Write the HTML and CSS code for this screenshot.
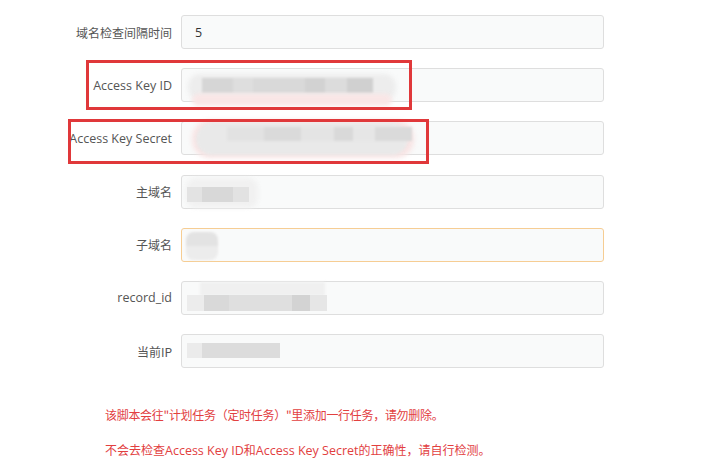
FILE: index.html
```html
<!DOCTYPE html>
<html>
<head>
<meta charset="utf-8">
<link rel="stylesheet" href="styles.css">
</head>
<body>
<form class="form">
  <div class="row">
    <label class="label">域名检查间隔时间</label>
    <div class="field"><span class="value">5</span></div>
  </div>
  <div class="row">
    <label class="label latin">Access Key ID</label>
    <div class="field">
      <span class="blob blob-id-bg"></span>
      <span class="blob blob-id"></span>
      <span class="blob blob-id-pink"></span>
    </div>
    <span class="mark mark-id"></span>
  </div>
  <div class="row">
    <label class="label latin">Access Key Secret</label>
    <div class="field">
      <span class="blob blob-sec-pink"></span>
      <span class="blob blob-sec-bg"></span>
      <span class="blob blob-sec"></span>
    </div>
    <span class="mark mark-sec"></span>
  </div>
  <div class="row">
    <label class="label">主域名</label>
    <div class="field">
      <span class="blob blob-main-bg"></span>
      <span class="blob blob-main"></span>
    </div>
  </div>
  <div class="row">
    <label class="label">子域名</label>
    <div class="field focus">
      <span class="blob blob-sub"></span>
    </div>
  </div>
  <div class="row">
    <label class="label latin">record_id</label>
    <div class="field">
      <span class="blob blob-rec-bg"></span>
      <span class="blob blob-rec"></span>
    </div>
  </div>
  <div class="row">
    <label class="label">当前IP</label>
    <div class="field">
      <span class="blob blob-ip"></span>
    </div>
  </div>
  <div class="notes">
    <p class="note tight">该脚本会往"计划任务（定时任务）"里添加一行任务，请勿删除。</p>
    <p class="note">不会去检查<span class="en">Access Key ID</span>和<span class="en">Access Key Secret</span>的正确性，请自行检测。</p>
  </div>
</form>
</body>
</html>
```

FILE: styles.css
```css
html, body {
  margin: 0;
  padding: 0;
  background: #ffffff;
}
body {
  width: 720px;
  height: 468px;
  overflow: hidden;
  font-family: "Open Sans", "Noto Sans CJK SC", sans-serif;
  font-size: 12px;
  color: #555555;
}
.form {
  display: flex;
  flex-direction: column;
  padding-top: 15px;
}
.row {
  position: relative;
  display: grid;
  grid-template-columns: 172px 423px;
  column-gap: 9px;
  align-items: center;
  height: 34px;
  margin-bottom: 19.2px;
}
.label {
  text-align: right;
  font-family: "Noto Sans CJK SC", sans-serif;
  font-size: 12px;
  color: #555555;
  white-space: nowrap;
}
.label.latin {
  font-family: "Open Sans", "Noto Sans CJK SC", sans-serif;
  font-size: 12.5px;
}
.field {
  position: relative;
  height: 34px;
  box-sizing: border-box;
  border: 1px solid #dedede;
  border-radius: 3px;
  background: #f9fafa;
  display: flex;
  align-items: center;
  padding-left: 13px;
  overflow: visible;
}
.field.focus {
  border-color: #f6cd93;
}
.value {
  font-family: "Open Sans", sans-serif;
  font-size: 12.5px;
  color: #333333;
}
.blob {
  position: absolute;
  display: block;
}
.blob-id-bg {
  left: 6px; top: 5px; width: 208px; height: 26px;
  background: #ededed;
  border-radius: 12px;
  filter: blur(2px);
}
.blob-id-pink {
  left: 10px; top: 25px; width: 200px; height: 12px;
  background: #f9e6e6;
  border-radius: 8px;
  filter: blur(2px);
}
.blob-id {
  left: 20px; top: 9px; width: 171px; height: 15px;
  background: linear-gradient(90deg, #d6d6d6 0 18%, #dedede 18% 30%, #d9d9d9 30% 60%, #d2d2d2 60% 72%, #dcdcdc 72% 85%, #d0d0d0 85% 100%);
  filter: blur(0.8px);
}
.blob-sec-pink {
  left: 10px; top: -2px; width: 222px; height: 38px;
  background: #f8e4e4;
  border-radius: 18px;
  filter: blur(2.5px);
}
.blob-sec-bg {
  left: 14px; top: 1px; width: 212px; height: 32px;
  background: #e9e9e9;
  border-radius: 16px;
  filter: blur(1.5px);
}
.blob-sec {
  left: 45px; top: 5px; width: 185px; height: 14px;
  background: linear-gradient(90deg, #e2e2e2 0 20%, #dadada 20% 40%, #e4e4e4 40% 58%, #d9d9d9 58% 68%, #e6e6e6 68% 80%, #dadada 80% 100%);
  filter: blur(1px);
}
.blob-main-bg {
  left: 4px; top: 2px; width: 72px; height: 30px;
  background: #f1f1f1;
  border-radius: 10px;
  filter: blur(2px);
}
.blob-main {
  left: 5px; top: 11px; width: 62px; height: 15px;
  background: linear-gradient(90deg, #e3e3e3 0 25%, #d8d8d8 25% 75%, #e2e2e2 75% 100%);
  filter: blur(0.6px);
}
.blob-sub {
  left: 4px; top: 3px; width: 32px; height: 28px;
  background: linear-gradient(180deg, #e3e3e3 0 50%, #ececec 50% 100%);
  border-radius: 8px;
  filter: blur(1.2px);
}
.blob-rec-bg {
  left: 18px; top: 0px; width: 125px; height: 14px;
  background: #f0f0f0;
  filter: blur(1.5px);
}
.blob-rec {
  left: 5px; top: 13px; width: 140px; height: 16px;
  background: linear-gradient(90deg, #ececec 0 12%, #d9d9d9 12% 30%, #dfdfdf 30% 75%, #d3d3d3 75% 88%, #e6e6e6 88% 100%);
  filter: blur(0.6px);
}
.blob-ip {
  left: 5px; top: 8px; width: 93px; height: 15px;
  background: linear-gradient(90deg, #ebebeb 0 16%, #dcdcdc 16% 100%);
  filter: blur(0.6px);
}
.mark {
  position: absolute;
  display: block;
  box-sizing: border-box;
  border: 3px solid #e0383a;
}
.mark-id {
  left: 86px; top: -8px; width: 326px; height: 50px;
}
.mark-sec {
  left: 68px; top: -2px; width: 361px; height: 45px;
}
.notes {
  display: flex;
  flex-direction: column;
  gap: 18px;
  padding-left: 105px;
  padding-top: 19px;
}
.note {
  margin: 0;
  font-family: "Noto Sans CJK SC", sans-serif;
  font-size: 12px;
  line-height: 17px;
  color: #e2403f;
}
.note.tight {
  letter-spacing: -0.3px;
}
.note .en {
  font-family: "Open Sans", sans-serif;
  font-size: 12.5px;
}
```
